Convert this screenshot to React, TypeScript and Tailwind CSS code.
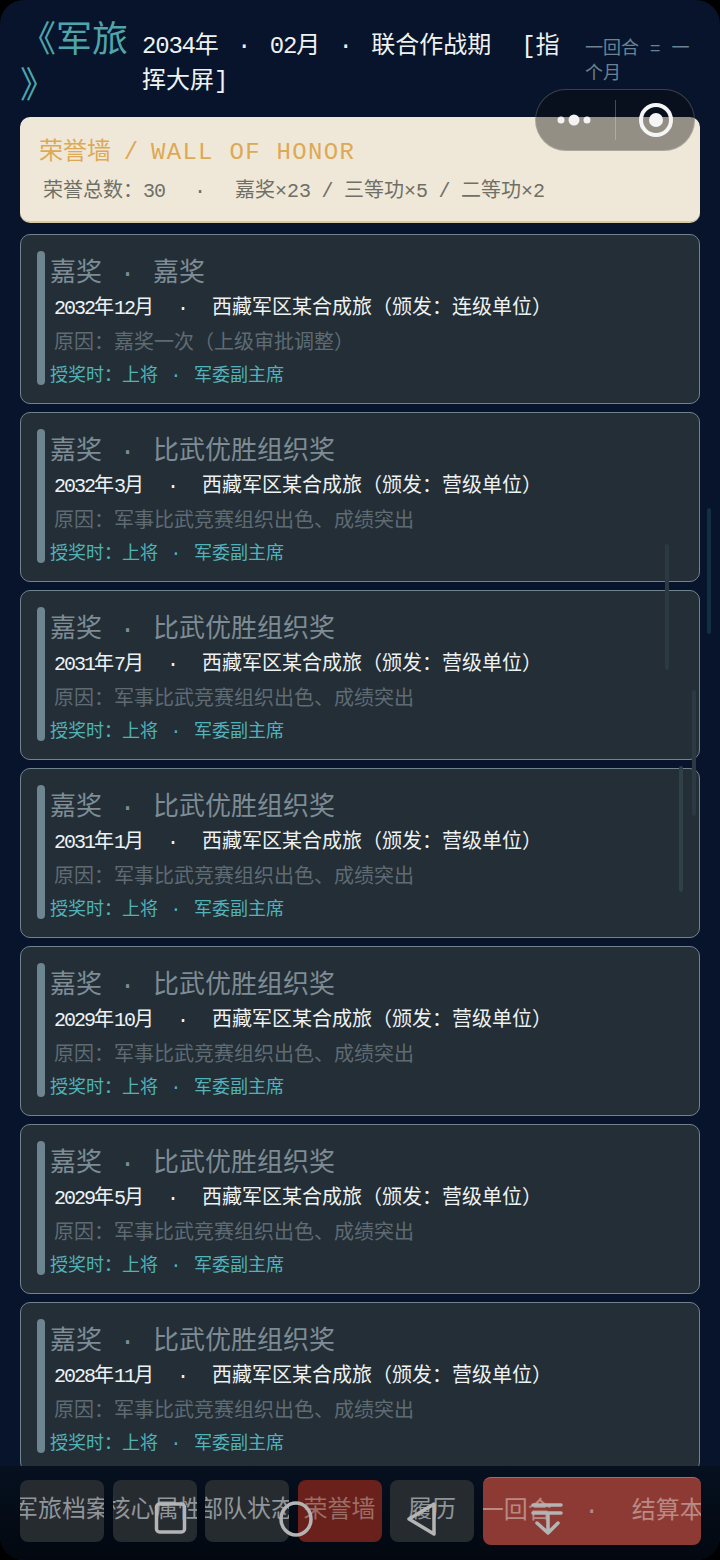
const honors = [
  { title: "嘉奖", date: "2032年12月", unit: "连级单位", reason: "原因：嘉奖一次（上级审批调整）" },
  { title: "比武优胜组织奖", date: "2032年3月", unit: "营级单位", reason: "原因：军事比武竞赛组织出色、成绩突出" },
  { title: "比武优胜组织奖", date: "2031年7月", unit: "营级单位", reason: "原因：军事比武竞赛组织出色、成绩突出" },
  { title: "比武优胜组织奖", date: "2031年1月", unit: "营级单位", reason: "原因：军事比武竞赛组织出色、成绩突出" },
  { title: "比武优胜组织奖", date: "2029年10月", unit: "营级单位", reason: "原因：军事比武竞赛组织出色、成绩突出" },
  { title: "比武优胜组织奖", date: "2029年5月", unit: "营级单位", reason: "原因：军事比武竞赛组织出色、成绩突出" },
  { title: "比武优胜组织奖", date: "2028年11月", unit: "营级单位", reason: "原因：军事比武竞赛组织出色、成绩突出" },
];

const tabs = ["军旅档案", "核心属性", "部队状态", "荣誉墙", "履历"];

// 数字は等幅フォントだと広すぎるので詰める
const Digits = ({ text, tight = "tracking-[-0.1em]" }: { text: string; tight?: string }) => (
  <>
    {text.split(/(\d+)/).map((part, i) =>
      /^\d/.test(part) ? (
        <span key={i} className={tight}>{part}</span>
      ) : (
        part
      )
    )}
  </>
);

const HonorCard = ({ title, date, unit, reason }: { title: string; date: string; unit: string; reason: string }) => (
  <div className="shrink-0 h-[170px] rounded-[10px] border border-[#71838f] bg-[#242e36] pl-4 pr-3 py-4 flex gap-[5px]">
    <div className="w-2 h-[134px] rounded bg-[#6d8491] shrink-0" />
    <div className="min-w-0 pt-1">
      <div className="text-[26px] leading-[38px] text-[#7d8c95] whitespace-nowrap">
        嘉奖<span className="inline-block w-[51px] text-center">·</span>{title}
      </div>
      <div className="pl-1 text-[20px] leading-[31px] text-[#eef2f2] whitespace-nowrap">
        <Digits text={date} />
        <span className="inline-block w-[58px] text-center">·</span>西藏军区某合成旅（颁发：{unit}）
      </div>
      <div className="pl-1 mt-1 text-[20px] leading-[32px] text-[#5f6b73] whitespace-nowrap">{reason}</div>
      <div className="text-[18px] leading-[32px] text-[#4fb3b8] whitespace-nowrap">
        授奖时：上将<span className="inline-block w-9 text-center">·</span>军委副主席
      </div>
    </div>
  </div>
);

export default function App() {
  return (
    <div className="relative w-[720px] h-[1560px] overflow-hidden bg-black font-['Liberation_Mono','Noto_Sans_CJK_SC',monospace]">
      <div className="w-full h-full rounded-[24px] bg-[#07142b] flex flex-col overflow-hidden">
        <header className="h-[117px] shrink-0 pl-5 pt-5 flex">
          <div className="w-[122px] shrink-0 text-[36px] leading-[46px] text-[#4fa5ab] [line-break:anywhere]">《军旅》</div>
          <div className="w-[443px] shrink-0 pr-[23px] text-[24px] leading-[35px] text-[#eef2f2] pt-[9px]">
            <Digits text="2034年" tight="tracking-[-0.05em]" />
            <span className="inline-block w-[51px] text-center">·</span>
            <Digits text="02月" tight="tracking-[-0.05em]" />
            <span className="inline-block w-[51px] text-center">·</span>
            联合作战期<span className="inline-block w-[30px]" />[指挥大屏]
          </div>
          <div className="w-[110px] text-[18px] leading-[25px] text-[#6b8295] pt-[17px]">一回合 = 一个月</div>
        </header>

        <section className="mx-5 h-[106px] shrink-0 rounded-[10px] bg-[#efe8d8] border-b-2 border-[#d6c9a6] pl-[19px] pt-[19px]">
          <div className="text-[24px] leading-[34px] text-[#dda955] whitespace-nowrap">
            荣誉墙<span className="inline-block w-10 text-center">/</span>
            <span className="tracking-[1.3px]">WALL OF HONOR</span>
          </div>
          <div className="pl-1 mt-[7px] text-[20px] leading-[30px] text-[#6f6f66] whitespace-nowrap">
            荣誉总数：<Digits text="30" tight="tracking-[-0.05em]" />
            <span className="inline-block w-[70px] text-center">·</span>
            嘉奖×23
            <span className="inline-block w-[33px] text-center">/</span>
            三等功×5
            <span className="inline-block w-[33px] text-center">/</span>
            二等功×2
          </div>
        </section>

        <main className="flex-1 min-h-0 overflow-hidden mt-[11px] px-5 flex flex-col gap-2">
          {honors.map((h) => (
            <HonorCard key={h.date} {...h} />
          ))}
        </main>

        <nav className="h-[94px] shrink-0 bg-gradient-to-b from-[#06101f] to-[#030810] pl-5 pr-[19px] pt-[11px] flex items-start gap-[8.5px]">
          {tabs.map((t) => (
            <div
              key={t}
              className={`w-[84px] h-[62px] mt-[3px] shrink-0 rounded-lg overflow-hidden flex items-center justify-center whitespace-nowrap text-[24px] ${
                t === "荣誉墙" ? "bg-[#6a211b] text-[#9a6f68]" : "bg-[#262b30] text-[#8f9599]"
              }`}
            >
              {t}
            </div>
          ))}
          <div className="flex-1 h-[68px] rounded-lg overflow-hidden flex items-center justify-center whitespace-nowrap text-[24px] text-[#b98a84] bg-[#8e3a34] border-t border-[#b5645e]">
            下一回合<span className="inline-block w-20 shrink-0 text-center">·</span>结算本月
          </div>
        </nav>
      </div>

      <div className="absolute left-[707px] top-[508px] w-1 h-[126px] rounded bg-[#123044]" />
      <div className="absolute left-[665px] top-[544px] w-1 h-[126px] rounded bg-[#2b3a42]" />
      <div className="absolute left-[692px] top-[690px] w-1 h-[126px] rounded bg-[#2b3a42]" />
      <div className="absolute left-[679px] top-[766px] w-1 h-[126px] rounded bg-[#2f4047]" />

      {/* capsule */}
      <div className="absolute left-[535px] top-[89px] w-[160px] h-[62px] rounded-full border border-white/20 bg-[#0a0a0a]/40 flex items-center">
        <svg width="79" height="60" viewBox="0 0 79 60" className="shrink-0">
          <circle cx="25" cy="30" r="3.5" fill="#f3f3f3" />
          <circle cx="38" cy="30" r="5.5" fill="#f3f3f3" />
          <circle cx="51" cy="30" r="3.5" fill="#f3f3f3" />
        </svg>
        <div className="w-px h-10 bg-[#ffffff40]" />
        <svg width="78" height="60" viewBox="0 0 78 60" className="shrink-0">
          <circle cx="40" cy="30" r="15" fill="none" stroke="#f5f5f5" strokeWidth="4" />
          <circle cx="40" cy="30" r="7" fill="#f5f5f5" />
        </svg>
      </div>

      {/* system nav */}
      <svg className="absolute left-[140px] top-[1490px]" width="440" height="55" viewBox="0 0 440 55" fill="none" stroke="#b4b4b4" strokeWidth="3.5" strokeLinejoin="round" strokeLinecap="round">
        <rect x="16.5" y="14" width="28" height="28" rx="3" />
        <ellipse cx="156" cy="29" rx="15" ry="16" />
        <path d="M294 14 L269 29 L294 44 Z" />
        <path d="M393 15 H421 M393 23 H421 M408 23 V43 M397 33 L408 43 L418 33" />
      </svg>
    </div>
  );
}
